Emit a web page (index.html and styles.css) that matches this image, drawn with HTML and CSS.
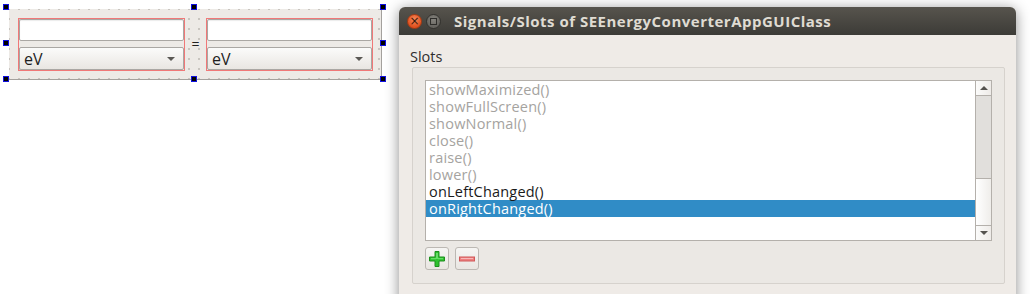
FILE: index.html
```html
<!DOCTYPE html>
<html lang="en">
<head>
<meta charset="UTF-8">
<title>Signals/Slots editor</title>
<link rel="stylesheet" href="styles.css">
</head>
<body>
  <div class="desktop">
    <div class="canvas">
      <div class="form">
        <div class="unit-group">
          <div class="line-edit"></div>
          <div class="combo">
            <span>eV</span>
            <span class="arrow"></span>
          </div>
        </div>
        <div class="equals">=</div>
        <div class="unit-group">
          <div class="line-edit"></div>
          <div class="combo">
            <span>eV</span>
            <span class="arrow"></span>
          </div>
        </div>

        <!-- selection handles -->
        <span class="handle h-tl"></span>
        <span class="handle h-tm"></span>
        <span class="handle h-tr"></span>
        <span class="handle h-ml"></span>
        <span class="handle h-mr"></span>
        <span class="handle h-bl"></span>
        <span class="handle h-bm"></span>
        <span class="handle h-br"></span>
      </div>
    </div>

    <div class="dialog">
      <div class="titlebar">
        <span class="win-btn close">&#215;</span>
        <span class="win-btn minimize"><span class="square"></span></span>
        <span class="title">Signals/Slots of SEEnergyConverterAppGUIClass</span>
      </div>
      <div class="dialog-body">
        <div class="label">Slots</div>
        <div class="frame">
          <div class="list">
            <div class="items">
              <div class="item disabled">showMaximized()</div>
              <div class="item disabled">showFullScreen()</div>
              <div class="item disabled">showNormal()</div>
              <div class="item disabled">close()</div>
              <div class="item disabled">raise()</div>
              <div class="item disabled">lower()</div>
              <div class="item">onLeftChanged()</div>
              <div class="item selected">onRightChanged()</div>
            </div>
            <div class="scrollbar">
              <div class="sb-btn"><span class="tri up"></span></div>
              <div class="sb-thumb"></div>
              <div class="sb-track"></div>
              <div class="sb-btn"><span class="tri down"></span></div>
            </div>
          </div>
          <div class="tool-row">
            <button class="tool-btn">
              <svg width="18" height="18" viewBox="0 0 18 18">
                <path d="M7 1.5h4v5.5h5.5v4H11v5.5H7V11H1.5V7H7z" fill="#2ec12e" stroke="#1d8f1d" stroke-width="1"/>
                <path d="M8 3h2v5h5v1.2H10V9H8V9.2H3V8h5z" fill="#7ee87e" opacity="0.7"/>
              </svg>
            </button>
            <button class="tool-btn">
              <svg width="18" height="18" viewBox="0 0 18 18">
                <rect x="1.5" y="7" width="15" height="4" fill="#ee8080" stroke="#d05858" stroke-width="1"/>
                <rect x="3" y="8" width="12" height="1" fill="#f8b8b8"/>
              </svg>
            </button>
          </div>
        </div>
      </div>
    </div>
  </div>
</body>
</html>
```

FILE: styles.css
```css
body {
  margin: 0;
  background-color: #ffffff;
  font-family: 'Open Sans', 'DejaVu Sans', sans-serif;
  color: #3c3c3c;
  overflow: hidden;
}

.desktop {
  display: flex;
  align-items: flex-start;
  width: 1030px;
  height: 294px;
}

/* designer canvas on the left */
.canvas {
  width: 399px;
  flex-shrink: 0;
  padding: 9px 0 0 9px;
  box-sizing: border-box;
}

.form {
  position: relative;
  display: flex;
  width: 373px;
  height: 71px;
  box-sizing: border-box;
  padding: 9px 8px 0 9px;
  background-color: #edeae6;
  background-image: radial-gradient(circle, #b4b0ab 0.6px, transparent 0.9px);
  background-size: 10px 10px;
  background-position: -5px -5px;
  border-right: 1px solid #a4a19d;
  border-bottom: 1px solid #a4a19d;
}

.unit-group {
  width: 168px;
  height: 53px;
  box-sizing: border-box;
  border: 1px solid #f07878;
  display: flex;
  flex-direction: column;
  gap: 6px;
}

.line-edit {
  height: 22px;
  box-sizing: border-box;
  background-color: #fff;
  border: 1px solid #aaa7a3;
  border-radius: 2px;
  box-shadow: inset 0 1px 1px rgba(0, 0, 0, 0.08);
}

.combo {
  height: 23px;
  box-sizing: border-box;
  border: 1px solid #aaa7a3;
  border-radius: 2px;
  background: linear-gradient(#fbfbfa, #e9e6e2);
  display: flex;
  align-items: center;
  justify-content: space-between;
  padding: 0 8px 0 4px;
  font-size: 16px;
  color: #1e1e1e;
}

.arrow {
  width: 0;
  height: 0;
  border-left: 4px solid transparent;
  border-right: 4px solid transparent;
  border-top: 4px solid #5a5854;
}

.equals {
  width: 21px;
  text-align: center;
  font-size: 14px;
  color: #222;
  padding-top: 16px;
}

.handle {
  position: absolute;
  width: 4px;
  height: 4px;
  background-color: #000;
  border: 1px solid #1010e0;
}
.h-tl { left: -6px; top: -5px; }
.h-tm { left: 182px; top: -5px; }
.h-tr { left: 371px; top: -5px; }
.h-ml { left: -6px; top: 31px; }
.h-mr { left: 371px; top: 31px; }
.h-bl { left: -6px; top: 67px; }
.h-bm { left: 182px; top: 67px; }
.h-br { left: 371px; top: 67px; }

/* dialog window */
.dialog {
  width: 617px;
  height: 300px;
  margin-top: 7px;
  flex-shrink: 0;
  border-radius: 6px 6px 0 0;
  background-color: #efebe7;
  box-shadow: 0 2px 14px rgba(0, 0, 0, 0.45);
}

.titlebar {
  height: 28px;
  display: flex;
  align-items: center;
  padding-left: 8px;
  border-radius: 6px 6px 0 0;
  background: linear-gradient(#57544d, #3c3b37);
}

.win-btn {
  width: 15px;
  height: 15px;
  border-radius: 50%;
  display: flex;
  align-items: center;
  justify-content: center;
  box-sizing: border-box;
}

.close {
  background: radial-gradient(circle at 50% 35%, #f68a5c, #e0501e 70%);
  border: 1px solid #a83a12;
  color: #3a1a0a;
  font-size: 12px;
  line-height: 1;
  font-family: 'DejaVu Sans', sans-serif;
}

.minimize {
  margin-left: 4px;
  background: radial-gradient(circle at 50% 35%, #85837d, #65635e 70%);
  border: 1px solid #33322e;
}

.square {
  width: 5px;
  height: 5px;
  border: 1px solid #2e2d2a;
}

.title {
  margin-left: 13px;
  font-weight: bold;
  font-size: 15px;
  letter-spacing: 0.5px;
  color: #dfdbd2;
}

.dialog-body {
  padding: 12px 11px 0 13px;
}

.label {
  font-size: 14.5px;
  color: #2e2e2e;
  height: 20px;
  margin-left: -2px;
}

.frame {
  height: 217px;
  box-sizing: border-box;
  border: 1px solid #d6d2cd;
  border-radius: 2px;
  background-color: #ebe8e4;
  padding: 12px 12px 0 12px;
}

.list {
  display: flex;
  height: 161px;
  box-sizing: border-box;
  border: 1px solid #b4b0ab;
  background-color: #fff;
}

.items {
  flex: 1;
}

.item {
  height: 17px;
  line-height: 17px;
  padding-left: 3px;
  font-size: 14.5px;
  letter-spacing: 0.2px;
  color: #1a1a1a;
}

.item.disabled {
  color: #a5a3a0;
}

.item.selected {
  background-color: #308cc6;
  color: #ffffff;
}

.scrollbar {
  width: 15px;
  display: flex;
  flex-direction: column;
  border-left: 1px solid #b4b0ab;
}

.sb-btn {
  height: 14px;
  display: flex;
  align-items: center;
  justify-content: center;
  background: linear-gradient(90deg, #fbfbfa, #eeebe8);
}

.sb-thumb {
  height: 82px;
  background-color: #e1dfdc;
  border-top: 1px solid #b4b0ab;
  border-bottom: 1px solid #b4b0ab;
}

.sb-track {
  flex: 1;
  background: linear-gradient(90deg, #ffffff, #efedea);
  border-bottom: 1px solid #b4b0ab;
}

.tri {
  width: 0;
  height: 0;
  border-left: 4px solid transparent;
  border-right: 4px solid transparent;
}
.tri.up { border-bottom: 4px solid #55534f; }
.tri.down { border-top: 4px solid #55534f; }

.tool-row {
  display: flex;
  gap: 6px;
  margin-top: 6px;
}

.tool-btn {
  width: 24px;
  height: 23px;
  padding: 0;
  display: flex;
  align-items: center;
  justify-content: center;
  border: 1px solid #bcb8b3;
  border-radius: 3px;
  background: linear-gradient(#f6f5f3, #e9e6e2);
}
```
